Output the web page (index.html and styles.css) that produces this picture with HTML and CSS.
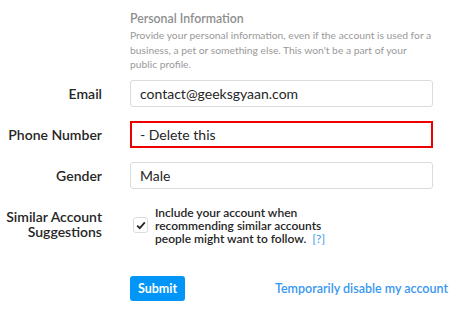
FILE: index.html
```html
<!DOCTYPE html>
<html lang="en">

<head>
    <meta charset="UTF-8">
    <meta name="viewport" content="width=device-width, initial-scale=1.0">
    <title>Edit Profile</title>
    <link rel="stylesheet" href="styles.css">
</head>

<body>
    <form class="profile-form">
        <div class="form-row intro">
            <div></div>
            <div>
                <h2>Personal Information</h2>
                <p>Provide your personal information, even if the account is used for a business, a pet or something else. This won't be a part of your public profile.</p>
            </div>
        </div>

        <div class="form-row">
            <label for="email">Email</label>
            <input type="text" id="email" value="contact@geeksgyaan.com">
        </div>
        <div class="form-row">
            <label for="phone">Phone Number</label>
            <input type="text" id="phone" class="error" value="- Delete this">
        </div>
        <div class="form-row">
            <label for="gender">Gender</label>
            <input type="text" id="gender" value="Male">
        </div>
        <div class="form-row suggest">
            <label for="similar">Similar Account Suggestions</label>
            <div class="check-group">
                <span class="check-box">
                    <svg width="10" height="9" viewBox="0 0 10 9"><path d="M1.2 4.6 L3.8 7.2 L8.8 1.4" fill="none" stroke="#262626" stroke-width="1.8"/></svg>
                </span>
                <span class="check-text">Include your account when recommending similar accounts people might want to follow. <a href="#">[?]</a></span>
            </div>
        </div>

        <div class="form-row footer">
            <div></div>
            <div class="button-group">
                <button type="button" class="submit">Submit</button>
                <a href="#" class="disable">Temporarily disable my account</a>
            </div>
        </div>
    </form>
</body>

</html>
```

FILE: styles.css
```css
body {
    margin: 0;
    font-family: Lato, "Open Sans", sans-serif;
    background: #fff;
    color: #262626;
}

.profile-form {
    padding-top: 11px;
}

.form-row {
    display: grid;
    grid-template-columns: 102px 303px;
    column-gap: 28px;
    align-items: center;
    margin-bottom: 14px;
}

.form-row label {
    text-align: right;
    font-size: 14px;
    font-weight: 600;
}

.intro {
    margin-bottom: 8px;
    align-items: start;
}

.intro h2 {
    margin: 0 0 2px 0;
    font-size: 12.3px;
    font-weight: 600;
    color: #8e8e8e;
}

.intro p {
    margin: 0;
    font-size: 10.3px;
    line-height: 14.5px;
    color: #999;
}

.form-row input {
    box-sizing: border-box;
    height: 27px;
    width: 303px;
    padding: 0 9px;
    border: 1px solid #dbdbdb;
    border-radius: 3px;
    font-family: inherit;
    font-size: 14px;
    color: #262626;
    background: #fff;
    outline: none;
}

.form-row input.error {
    border: 2px solid #ed0000;
    border-radius: 0;
    padding: 0 8px;
}

.suggest {
    margin-top: 8px;
}

.suggest label {
    line-height: 15px;
    margin-left: -12px;
}

.check-group {
    display: flex;
    align-items: center;
    gap: 7px;
    padding-left: 3px;
    padding-top: 3px;
}

.check-box {
    display: flex;
    align-items: center;
    justify-content: center;
    width: 13px;
    height: 14px;
    border: 1px solid #dbdbdb;
    border-radius: 3px;
    flex-shrink: 0;
}

.check-text {
    font-size: 12px;
    line-height: 13px;
    font-weight: 600;
    width: 176px;
}

.check-text a {
    color: #3897f0;
    text-decoration: none;
    font-weight: 400;
    margin-left: 3px;
}

.footer {
    margin-top: 31px;
}

.button-group {
    display: flex;
    justify-content: space-between;
    align-items: center;
    margin-right: -15px;
}

.submit {
    background: #0095f6;
    color: #fff;
    border: none;
    border-radius: 3px;
    height: 25px;
    width: 55px;
    font-family: inherit;
    font-size: 12.5px;
    font-weight: 700;
    padding: 0;
}

.disable {
    color: #3897f0;
    text-decoration: none;
    font-size: 12.5px;
    font-weight: 600;
}
```
